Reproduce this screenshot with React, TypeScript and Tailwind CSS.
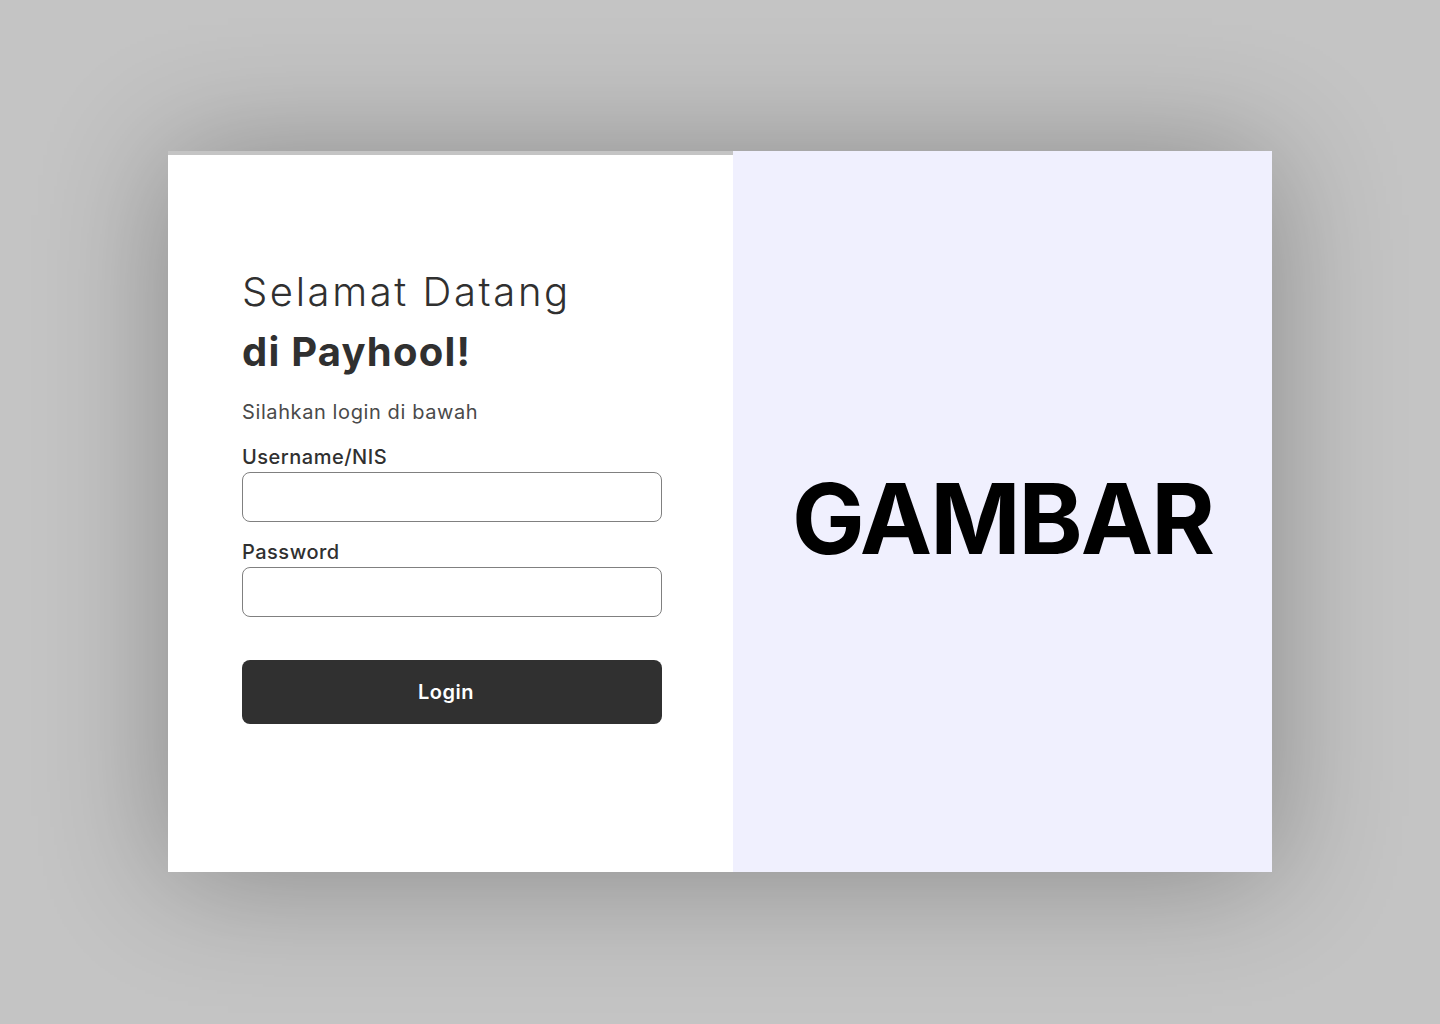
export default function App() {
  return (
    <div
      className="min-h-screen w-full bg-[#c4c4c4] flex justify-center pt-[151px]"
      style={{ fontFamily: 'Inter, "Open Sans", sans-serif' }}
    >
      <div className="flex items-end self-start shadow-[0_4px_120px_rgba(0,0,0,0.3)]">
        {/* form */}
        <div className="w-[565px] h-[717px] bg-white pl-[74px] pt-[107px]">
          <h1 className="text-[40px] leading-[60px] font-light tracking-[2.6px] text-[#303030]">Selamat Datang</h1>
          <h2 className="text-[40px] leading-[60px] font-bold tracking-[1.2px] text-[#303030]">di Payhool!</h2>
          <p className="mt-[15px] text-[20px] leading-[30px] tracking-[0.6px] text-[#4a4a4a]">Silahkan login di bawah</p>

          <form className="w-[420px]" onSubmit={(e) => e.preventDefault()}>
            <label className="block mt-[15px] text-[20px] leading-[30px] font-medium tracking-[0.5px] text-[#303030]">
              Username/NIS
            </label>
            <input
              type="text"
              className="block w-full h-[50px] rounded-lg border border-[#808080] px-4 outline-none"
            />
            <label className="block mt-[15px] text-[20px] leading-[30px] font-medium tracking-[0.5px] text-[#303030]">
              Password
            </label>
            <input
              type="password"
              className="block w-full h-[50px] rounded-lg border border-[#808080] px-4 outline-none"
            />
            <button
              type="submit"
              className="mt-[43px] w-full h-[64px] rounded-lg bg-[#303030] pr-3 text-white text-[20px] font-semibold tracking-[0.5px]"
            >
              Login
            </button>
          </form>
        </div>

        {/* gambar */}
        <div className="w-[539px] h-[721px] bg-[#f0f0fe] flex items-center justify-center pt-[14px]">
          <span className="text-[97px] leading-none font-bold tracking-[-2px] text-black">GAMBAR</span>
        </div>
      </div>
    </div>
  );
}
